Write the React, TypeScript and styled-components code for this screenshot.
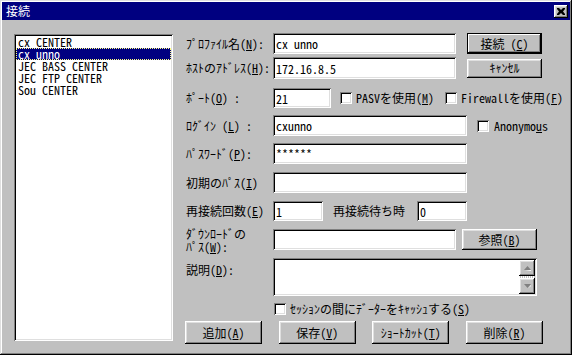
import React from 'react'
import styled, { createGlobalStyle, css } from 'styled-components'

const GlobalStyle = createGlobalStyle`
  html, body {
    margin: 0;
    padding: 0;
    background: #c0c0c0;
  }
  body {
    font-family: "Noto Sans Mono CJK JP", "Noto Sans CJK JP", monospace;
    font-size: 12px;
    color: #000;
  }
`

const raised = css`
  box-shadow: inset -1px -1px #000, inset 1px 1px #fff, inset -2px -2px #808080, inset 2px 2px #dfdfdf;
`

const sunken = css`
  box-shadow: inset 1px 1px #808080, inset -1px -1px #fff, inset 2px 2px #000, inset -2px -2px #dfdfdf;
`

const profiles = ['cx CENTER', 'cx unno', 'JEC BASS CENTER', 'JEC FTP CENTER', 'Sou CENTER']

export default function App() {
  return (
    <>
      <GlobalStyle />
      <Window>
        <TitleBar>
          <Title>接続</Title>
          <CloseButton>
            <svg width="8" height="7" viewBox="0 0 8 7">
              <path d="M0 0h2l2 2 2-2h2v1L6 3.5 8 6v1H6L4 5 2 7H0V6l2-2.5L0 1z" fill="#000" />
            </svg>
          </CloseButton>
        </TitleBar>
        <Body>
          <ListBox>
            {profiles.map((p, i) => (
              <ListItem key={p} $selected={i === 1}>{p}</ListItem>
            ))}
          </ListBox>
          <Form>
            <Row $mt={0} $h={21}>
              <Label>ﾌﾟﾛﾌｧｲﾙ名(<u>N</u>):</Label>
              <Field $w={183} value="cx unno" readOnly />
              <Button $w={75} $h={21} $ml={11} $default>接続 (<u>C</u>)</Button>
            </Row>
            <Row $mt={3} $h={22}>
              <Label>ﾎｽﾄのｱﾄﾞﾚｽ(<u>H</u>):</Label>
              <Field $w={183} value="172.16.8.5" readOnly />
              <Button $w={75} $h={19} $ml={11}>ｷｬﾝｾﾙ</Button>
            </Row>
            <Row $mt={9} $h={20}>
              <Label>ﾎﾟｰﾄ(<u>O</u>) :</Label>
              <Field $w={58} value="21" readOnly />
              <Check $ml={9}>
                <Box />
                <span>PASVを使用(<u>M</u>)</span>
              </Check>
              <Check $ml={11}>
                <Box />
                <span>Firewallを使用(<u>F</u>)</span>
              </Check>
            </Row>
            <Row $mt={7} $h={21}>
              <Label>ﾛｸﾞｲﾝ (<u>L</u>) :</Label>
              <Field $w={194} value="cxunno" readOnly />
              <Check $ml={10} $gap={5}>
                <Box />
                <span>Anonymo<u>u</u>s</span>
              </Check>
            </Row>
            <Row $mt={7} $h={21}>
              <Label>ﾊﾟｽﾜｰﾄﾞ(<u>P</u>):</Label>
              <Field $w={194} value="******" readOnly />
            </Row>
            <Row $mt={8} $h={21}>
              <Label>初期のﾊﾟｽ(<u>I</u>)</Label>
              <Field $w={194} value="" readOnly />
            </Row>
            <Row $mt={8} $h={20}>
              <Label>再接続回数(<u>E</u>)</Label>
              <Field $w={50} value="1" readOnly />
              <InlineLabel>再接続待ち時</InlineLabel>
              <Field $w={50} value="0" readOnly />
            </Row>
            <Row $mt={8} $h={21}>
              <Label $twoLine>ﾀﾞｳﾝﾛｰﾄﾞの<br />ﾊﾟｽ(<u>W</u>):</Label>
              <Field $w={183} value="" readOnly />
              <Button $w={75} $h={21} $ml={6}>参照(<u>B</u>)</Button>
            </Row>
            <Row $mt={8} $h={38} $top>
              <Label $topAlign>説明(<u>D</u>):</Label>
              <Memo>
                <MemoText />
                <ScrollBar>
                  <ArrowButton>
                    <svg width="7" height="5" viewBox="0 0 7 5">
                      <path d="M3.5 0L7 4H0z" fill="#808080" />
                      <path d="M1 5h6V4z" fill="#fff" />
                    </svg>
                  </ArrowButton>
                  <Track />
                  <ArrowButton>
                    <svg width="7" height="5" viewBox="0 0 7 5">
                      <path d="M0 0h7L3.5 4z" fill="#808080" />
                      <path d="M4 4.5L7 1v1z" fill="#fff" />
                    </svg>
                  </ArrowButton>
                </ScrollBar>
              </Memo>
            </Row>
            <Row $mt={6} $h={13}>
              <Check $ml={88}>
                <Box />
                <span>ｾｯｼｮﾝの間にﾃﾞｰﾀｰをｷｬｯｼｭする(<u>S</u>)</span>
              </Check>
            </Row>
            <ButtonRow>
              <Button $w={77} $h={23}>追加(<u>A</u>)</Button>
              <Button $w={77} $h={23}>保存(<u>V</u>)</Button>
              <Button $w={77} $h={23}>ｼｮｰﾄｶｯﾄ(<u>T</u>)</Button>
              <Button $w={77} $h={23}>削除(<u>R</u>)</Button>
            </ButtonRow>
          </Form>
        </Body>
      </Window>
    </>
  )
}

const Window = styled.div`
  width: 572px;
  height: 355px;
  box-sizing: border-box;
  padding: 2px;
  background: #c0c0c0;
  box-shadow: inset -1px -1px #000, inset 1px 1px #dfdfdf, inset -2px -2px #808080, inset 2px 2px #fff;
  display: flex;
  flex-direction: column;
`

const TitleBar = styled.div`
  height: 18px;
  background: #000080;
  display: flex;
  align-items: center;
  padding: 0 2px 0 4px;
`

const Title = styled.span`
  color: #fff;
  font-size: 12px;
  line-height: 14px;
`

const CloseButton = styled.div`
  margin-left: auto;
  width: 14px;
  height: 13px;
  background: #c0c0c0;
  ${raised};
  display: flex;
  align-items: center;
  justify-content: center;
`

const Body = styled.div`
  flex: 1;
  display: flex;
  padding: 13px 0 0 12px;
`

const ListBox = styled.div`
  width: 159px;
  height: 307px;
  margin-top: 1px;
  box-sizing: border-box;
  padding: 2px 2px;
  background: #fff;
  ${sunken};
`

const ListItem = styled.div<{ $selected?: boolean }>`
  height: 12px;
  line-height: 12px;
  padding-left: 2px;
  white-space: pre;
  box-sizing: border-box;
  ${p => p.$selected && css`
    background: #000080;
    color: #fff;
    outline: 1px dotted #ffff80;
    outline-offset: -1px;
  `}
`

const Form = styled.div`
  margin-left: 13px;
  display: flex;
  flex-direction: column;
`

const Row = styled.div<{ $mt: number; $h: number; $top?: boolean }>`
  display: flex;
  align-items: ${p => (p.$top ? 'flex-start' : 'center')};
  margin-top: ${p => p.$mt}px;
  height: ${p => p.$h}px;
`

const Label = styled.div<{ $twoLine?: boolean; $topAlign?: boolean }>`
  width: 87px;
  flex-shrink: 0;
  line-height: ${p => (p.$twoLine ? '13px' : '14px')};
  white-space: nowrap;
  ${p => p.$topAlign && css`padding-top: 5px;`}
`

const InlineLabel = styled.span`
  margin: 0 12px 0 10px;
  white-space: nowrap;
  line-height: 14px;
`

const Field = styled.input<{ $w: number }>`
  width: ${p => p.$w}px;
  height: 100%;
  box-sizing: border-box;
  border: none;
  outline: none;
  padding: 0 3px;
  margin: 0;
  background: #fff;
  font: inherit;
  color: #000;
  ${sunken};
`

const Button = styled.div<{ $w: number; $h: number; $ml?: number; $default?: boolean }>`
  width: ${p => p.$w}px;
  height: ${p => p.$h}px;
  margin-left: ${p => p.$ml ?? 0}px;
  box-sizing: border-box;
  background: #c0c0c0;
  display: flex;
  align-items: center;
  justify-content: center;
  white-space: nowrap;
  line-height: 14px;
  flex-shrink: 0;
  ${p =>
    p.$default
      ? css`
          box-shadow: inset 0 0 0 1px #000, inset -2px -2px #000, inset 2px 2px #fff, inset -3px -3px #808080;
        `
      : raised};
`

const Check = styled.label<{ $ml?: number; $gap?: number }>`
  display: flex;
  align-items: center;
  gap: ${p => p.$gap ?? 4}px;
  margin-left: ${p => p.$ml ?? 0}px;
  white-space: nowrap;
  line-height: 14px;
`

const Box = styled.span`
  width: 12px;
  height: 12px;
  box-sizing: border-box;
  background: #fff;
  ${sunken};
`

const Memo = styled.div`
  width: 264px;
  height: 38px;
  box-sizing: border-box;
  padding: 2px;
  display: flex;
  background: #fff;
  ${sunken};
`

const MemoText = styled.div`
  flex: 1;
`

const ScrollBar = styled.div`
  width: 16px;
  display: flex;
  flex-direction: column;
`

const ArrowButton = styled.div`
  height: 16px;
  background: #c0c0c0;
  ${raised};
  display: flex;
  align-items: center;
  justify-content: center;
`

const Track = styled.div`
  flex: 1;
  background: repeating-linear-gradient(90deg, #fff 0 1px, #c0c0c0 1px 2px);
`

const ButtonRow = styled.div`
  display: flex;
  justify-content: space-between;
  width: 358px;
  margin: 6px 0 0 -1px;
`
